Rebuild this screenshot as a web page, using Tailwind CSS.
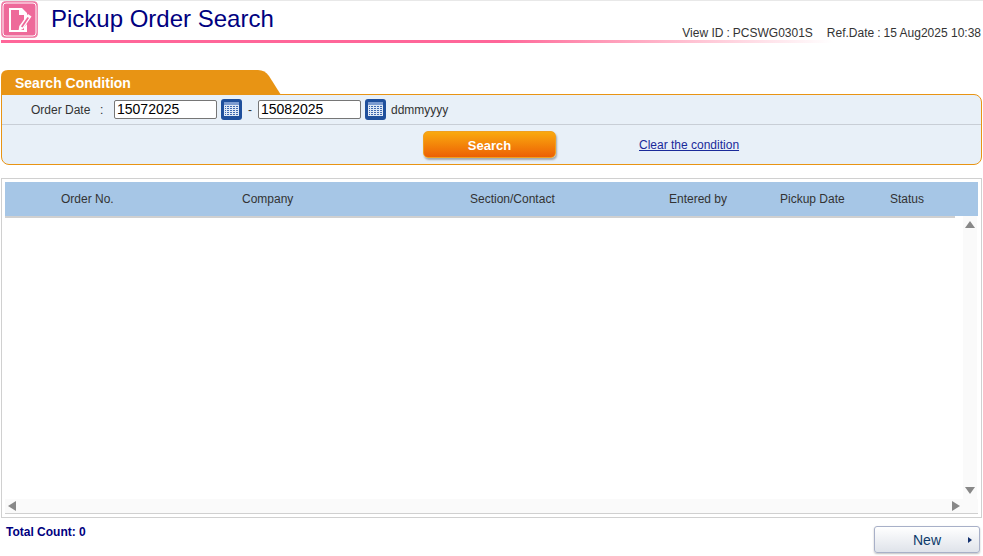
<!DOCTYPE html>
<html lang="en">
<head>
  <meta charset="UTF-8" />
  <title>Pickup Order Search</title>
  <script src="https://cdn.jsdelivr.net/npm/@tailwindcss/browser@4"></script>
</head>
<body class="bg-white h-[556px] w-[983px] overflow-hidden font-['Liberation_Sans',Arial,sans-serif] text-[12px] text-[#333]">
  <!-- header -->
  <div class="h-px bg-[#e8e8e8]"></div>
  <div class="flex h-[39px] ml-px mr-[2px]">
    <svg class="w-[37px] h-[37px] shrink-0" viewBox="0 0 37 37">
      <rect x="0.5" y="0.5" width="36" height="36" rx="4" fill="#ee6a9a" stroke="#f08aae"/>
      <rect x="2" y="2" width="33" height="33" rx="3" fill="none" stroke="#fff" stroke-width="1"/>
      <path d="M8 7h13l5 5v4l-3 4v-6h-5V9H10v20h13v-3l3-3v8H8z" fill="#fff"/>
      <path d="M27 13l3.500 2.500L22 28l-4.500 2 .8-5z" fill="#fff"/>
      <path d="M26.500 16l1.500 1-6.500 9.500-1.500-1z" fill="#ee6a9a"/>
    </svg>
    <div class="ml-[13px] text-[24px] leading-[36px] text-[#000080]">Pickup Order Search</div>
    <div class="ml-auto mt-[25px] flex leading-[14px] text-[12px] text-[#333]">
      <span class="mr-[14px]">View ID<span class="mx-[3px]">:</span>PCSWG0301S</span>
      <span>Ref.Date<span class="mx-[3px]">:</span>15 Aug2025 10:38</span>
    </div>
  </div>
  <div class="h-[3px] ml-px mr-[150px] bg-gradient-to-r from-[#ff6699] from-60% to-white"></div>

  <!-- search condition -->
  <div class="mt-[27px] mx-px">
    <div class="relative h-[25px] w-[280px]">
      <svg class="absolute inset-0" width="280" height="25" viewBox="0 0 280 25">
        <path d="M0 25V7q0-7 7-7h250q7 0 11 6l12 19z" fill="#e89414"/>
      </svg>
      <div class="relative pl-[14px] text-[14px] font-bold leading-[26px] text-white">Search Condition</div>
    </div>
    <div class="-mt-px h-[71px] border border-[#e89414] rounded-b-[8px] rounded-tr-[8px] bg-[#e8f0f8]">
      <div class="flex items-center h-[30px] border-b border-[#c8ced6]">
        <span class="ml-[29px] w-[69px]">Order Date</span>
        <span class="w-[14px]">:</span>
        <div class="w-[103px] h-[19px] border border-[#767676] rounded-[2px] bg-white pl-[2px] text-[14px] leading-[17px] text-black">15072025</div>
        <svg class="ml-[4px] w-[21px] h-[21px]" viewBox="0 0 21 21">
          <rect width="21" height="21" rx="3" fill="#1f4f9c"/>
          <rect x="3" y="3" width="15" height="14" fill="#dfe8f5"/>
          <rect x="3" y="3" width="15" height="3" fill="#7c9bd0"/>
          <path d="M4 7.500h13M4 9.500h13M4 11.500h13M4 13.500h13M4 15.500h13" stroke="#3f69b0"/>
          <path d="M5.500 7v9M8.500 7v9M11.500 7v9M14.500 7v9" stroke="#dfe8f5"/>
        </svg>
        <span class="ml-[6px] w-[10px]">-</span>
        <div class="w-[103px] h-[19px] border border-[#767676] rounded-[2px] bg-white pl-[2px] text-[14px] leading-[17px] text-black">15082025</div>
        <svg class="ml-[4px] w-[21px] h-[21px]" viewBox="0 0 21 21">
          <rect width="21" height="21" rx="3" fill="#1f4f9c"/>
          <rect x="3" y="3" width="15" height="14" fill="#dfe8f5"/>
          <rect x="3" y="3" width="15" height="3" fill="#7c9bd0"/>
          <path d="M4 7.500h13M4 9.500h13M4 11.500h13M4 13.500h13M4 15.500h13" stroke="#3f69b0"/>
          <path d="M5.500 7v9M8.500 7v9M11.500 7v9M14.500 7v9" stroke="#dfe8f5"/>
        </svg>
        <span class="ml-[5px]">ddmmyyyy</span>
      </div>
      <div class="flex items-start pt-[6px]">
        <div class="ml-[421px] w-[133px] h-[27px] rounded-[5px] border border-[#f0a020] bg-gradient-to-b from-[#f9a90f] to-[#ec5f05] shadow-[1px_2px_2px_rgba(0,0,0,0.3)] text-center text-[13px] font-bold leading-[27px] text-white">Search</div>
        <a class="ml-[83px] mt-[7px] leading-[14px] text-[#1a2a9a] underline">Clear the condition</a>
      </div>
    </div>
  </div>

  <!-- result list -->
  <div class="mt-[13px] mx-px h-[340px] border border-[#d0d0d0] p-[3px] flex flex-col">
    <div class="flex shrink-0 h-[34px] items-center bg-[#a6c6e6] text-[12px] text-[#333]">
      <div class="ml-[56px] w-[181px]">Order No.</div>
      <div class="w-[228px]">Company</div>
      <div class="w-[199px]">Section/Contact</div>
      <div class="w-[111px]">Entered by</div>
      <div class="w-[110px]">Pickup Date</div>
      <div>Status</div>
    </div>
    <div class="flex-1 flex flex-col min-h-0">
      <div class="flex-1 flex min-h-0">
        <div class="w-[950px] h-[2px] bg-[#d0d0d0] shrink-0"></div>
        <div class="ml-[8px] w-[14px] bg-[#fafafa] flex flex-col items-center justify-between py-[5px]">
          <div class="w-0 h-0 border-x-[5px] border-x-transparent border-b-[7px] border-b-[#888]"></div>
          <div class="w-0 h-0 border-x-[5px] border-x-transparent border-t-[7px] border-t-[#888]"></div>
        </div>
      </div>
      <div class="h-[15px] shrink-0 bg-[#fafafa] border-b border-[#d0d0d0] flex items-center justify-between pl-[3px] pr-[18px]">
        <div class="w-0 h-0 border-y-[5px] border-y-transparent border-r-[8px] border-r-[#888]"></div>
        <div class="w-0 h-0 border-y-[5px] border-y-transparent border-l-[8px] border-l-[#888]"></div>
      </div>
    </div>
  </div>

  <!-- footer -->
  <div class="flex items-start mt-[8px] pl-[6px] pr-[3px]">
    <div class="mt-[-1px] text-[12px] font-bold leading-[14px] text-[#000080]">Total Count: 0</div>
    <div class="ml-auto relative w-[106px] h-[27px] rounded-[3px] border border-[#a8b0c8] bg-gradient-to-b from-white to-[#dfe3ea] shadow-[0_1px_2px_rgba(0,0,0,0.25)] text-center text-[14px] leading-[26px] text-[#0a3a6a]">
      New
      <div class="absolute right-[7px] top-[10px] w-0 h-0 border-y-[3px] border-y-transparent border-l-[4px] border-l-[#12306e]"></div>
    </div>
  </div>
</body>
</html>
